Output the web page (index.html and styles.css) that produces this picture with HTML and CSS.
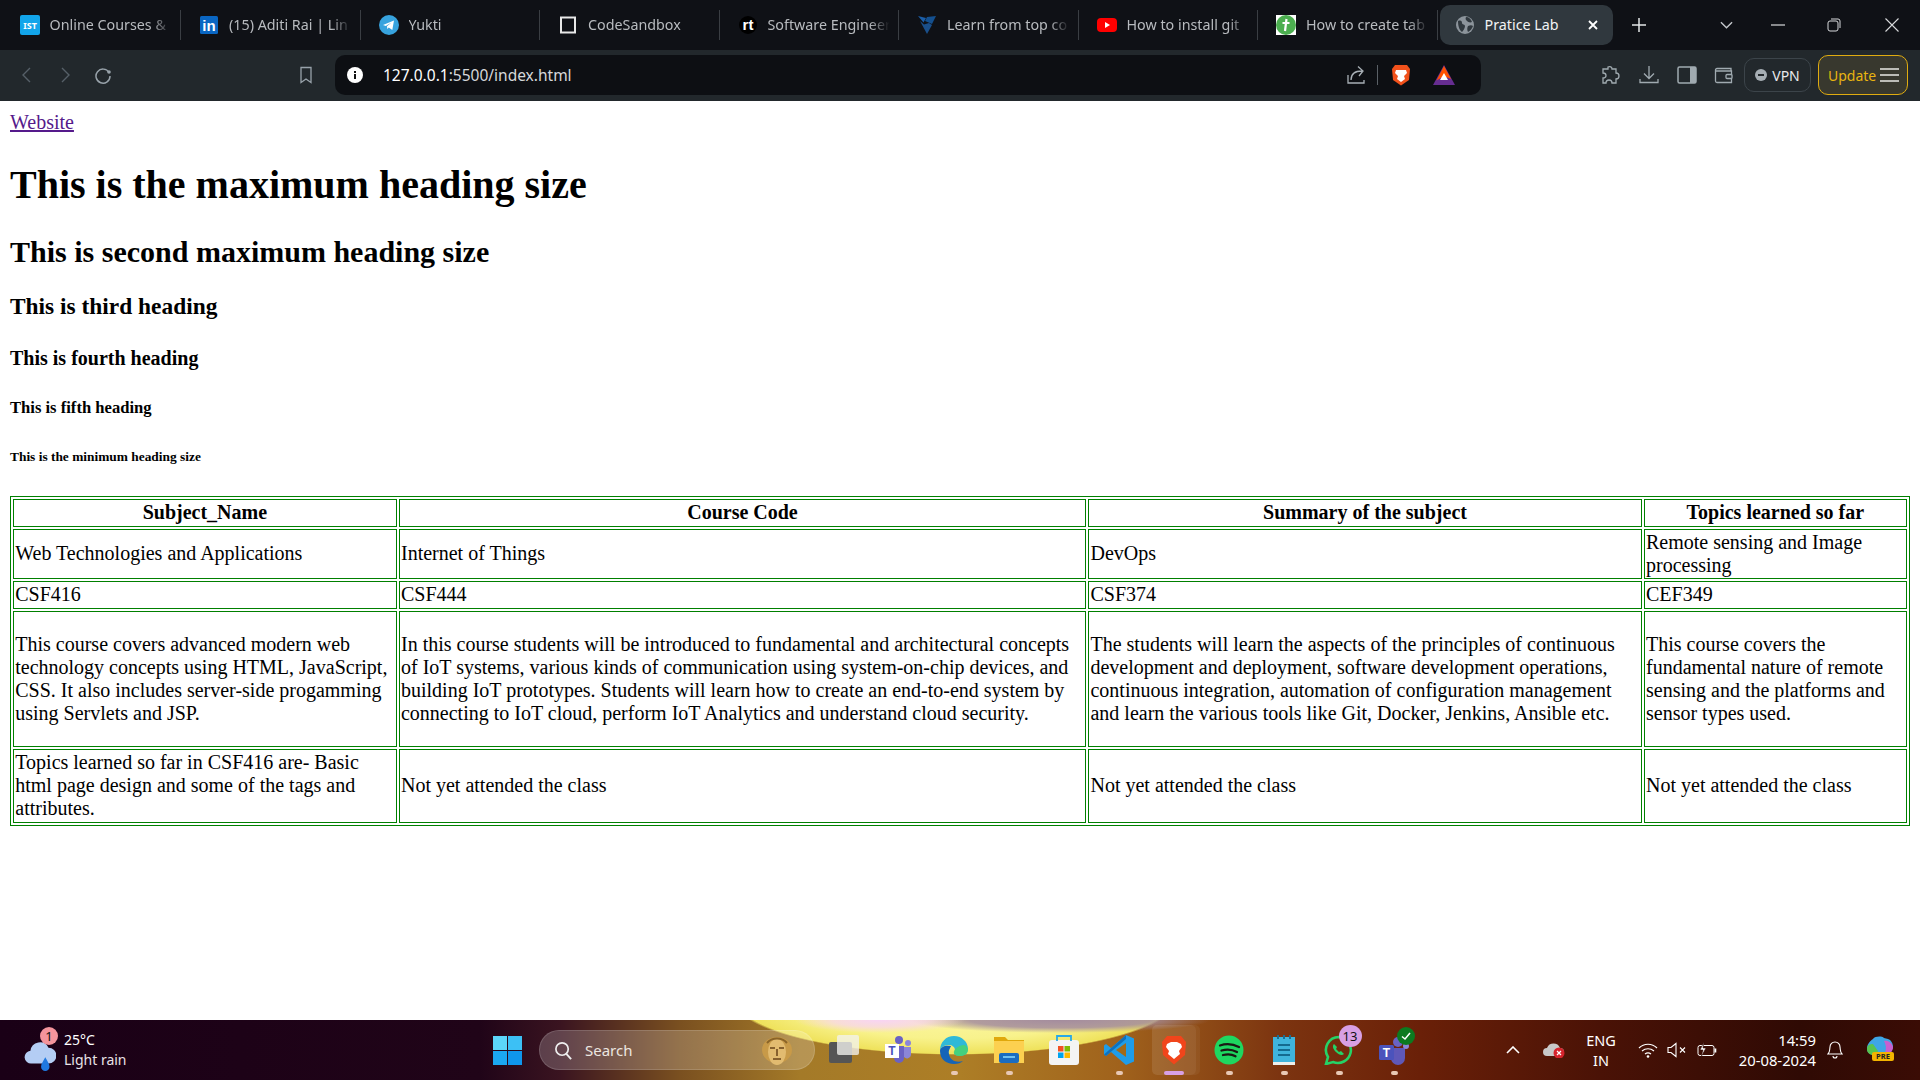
FILE: index.html
```html
<!DOCTYPE html>
<html lang="en">
<head>
<meta charset="utf-8">
<title>Pratice Lab</title>
<link rel="stylesheet" href="styles.css">
</head>
<body>
<div class="screen">
  <header class="browser">
    <div class="tabstrip">
      <div class="tab"><svg class="fav" viewBox="0 0 20 20"><rect width="20" height="20" rx="2" fill="#12a5ea"/><text x="10" y="14" class="favt">IST</text></svg><span class="tabtitle">Online Courses &amp;</span></div>
      <div class="tab"><svg class="fav" viewBox="0 0 20 20"><rect x="1" y="1" width="18" height="18" rx="1.500" fill="#0a66c2"/><text x="10" y="16" class="favin">in</text></svg><span class="tabtitle">(15) Aditi Rai | Lin</span></div>
      <div class="tab"><svg class="fav" viewBox="0 0 20 20"><circle cx="10" cy="10" r="10" fill="#37a3de"/><path d="M4 10 15 5.500 13.300 15 9.800 12.500 8.300 14 8 11.300 12.500 7.500 6.800 11z" fill="#fff"/></svg><span class="tabtitle">Yukti</span></div>
      <div class="tab"><svg class="fav" viewBox="0 0 20 20"><rect x="3" y="2.500" width="14" height="15" fill="none" stroke="#e8e8e8" stroke-width="2"/></svg><span class="tabtitle">CodeSandbox</span></div>
      <div class="tab"><svg class="fav" viewBox="0 0 20 20"><circle cx="10" cy="10" r="9" fill="#000"/><text x="10" y="15" class="favrt">rt</text></svg><span class="tabtitle">Software Engineer</span></div>
      <div class="tab"><svg class="fav" viewBox="0 0 20 20"><path d="M1 1 9 3 6.500 7.500z" fill="#1b5ea8"/><path d="M10 2 19 1 15 9 8 6z" fill="#14508f"/><path d="M3 6 7 9.500 12 8 15 10 10 19z" fill="#1a4f8a"/></svg><span class="tabtitle">Learn from top co</span></div>
      <div class="tab"><svg class="fav" viewBox="0 0 20 20"><rect y="3" width="20" height="14" rx="4" fill="#f00"/><path d="M8 7 13 10 8 13z" fill="#fff"/></svg><span class="tabtitle">How to install git</span></div>
      <div class="tab"><svg class="fav" viewBox="0 0 20 20"><rect width="20" height="20" fill="#fff"/><circle cx="10" cy="10" r="10" fill="#4caf50"/><path d="M10.500 4 9 16M6.500 8h7" stroke="#fff" stroke-width="2.200" fill="none"/></svg><span class="tabtitle">How to create tab</span></div>
      <div class="tab tab-active"><svg class="fav-globe" viewBox="0 0 18 18"><circle cx="9" cy="9" r="9" fill="#8c949b"/><path d="M2 5c3-1 4 0 4 2s3 1 3 3-2 5-3 6C3 14 2 9 2 5zM10 1c3 0 5 2 6 5-2 1-4 0-5-1s-2-2-1-4zM12 10c2-1 4-1 5 0-1 3-3 5-5 6-1-2-1-4 0-6z" fill="#30383e"/></svg><span class="active-title">Pratice Lab</span><svg class="ic-close" viewBox="0 0 12 12"><path d="M2 2 10 10M10 2 2 10" stroke="#fff" stroke-width="1.800"/></svg></div>
      <svg class="newtab" viewBox="0 0 14 14"><path d="M7 0v14M0 7h14" stroke="#e4e6e8" stroke-width="1.500"/></svg>
      <svg class="tabmenu" viewBox="0 0 14 8"><path d="M1 1 7 7 13 1" stroke="#c4c8cc" stroke-width="1.500" fill="none"/></svg>
      <svg class="winbtn win-min" viewBox="0 0 14 14"><path d="M0 7h14" stroke="#d8dadc" stroke-width="1.200"/></svg>
      <svg class="winbtn win-max" viewBox="0 0 14 14"><rect x="1" y="3" width="10" height="10" rx="2" fill="none" stroke="#d8dadc"/><path d="M4 1h7a2 2 0 0 1 2 2v7" fill="none" stroke="#d8dadc"/></svg>
      <svg class="winbtn win-close" viewBox="0 0 14 14"><path d="M.500.500 13.500 13.500M13.500.500.500 13.500" stroke="#d8dadc" stroke-width="1.100"/></svg>
    </div>
    <div class="toolbar">
      <span class="slot"><svg class="i18" viewBox="0 0 18 18"><path d="M12 2 5 9 12 16" stroke="#566068" stroke-width="1.400" fill="none"/></svg></span>
      <span class="slot"><svg class="i18" viewBox="0 0 18 18"><path d="M6 2 13 9 6 16" stroke="#566068" stroke-width="1.400" fill="none"/></svg></span>
      <span class="slot"><svg class="i18" viewBox="0 0 18 18"><path d="M15 6.500A7 7 0 1 0 16 10" stroke="#98a2aa" stroke-width="1.500" fill="none"/><circle cx="15" cy="6" r="1.800" fill="#98a2aa"/></svg></span>
      <span class="slot slot-bookmark"><svg class="i18" viewBox="0 0 18 18"><path d="M4 1.500h10V16.500L9 13 4 16.500z" stroke="#98a2aa" stroke-width="1.300" fill="none"/></svg></span>
      <div class="urlbar">
        <svg class="info" viewBox="0 0 16 16"><circle cx="8" cy="8" r="8" fill="#fff"/><rect x="7" y="7" width="2" height="5" fill="#111"/><rect x="7" y="4" width="2" height="2" fill="#111"/></svg>
        <span class="url">127.0.0.1<span class="url-dim">:5500/index.html</span></span>
        <svg class="share" viewBox="0 0 20 20"><path d="M2 10v8h16v-3" stroke="#a8b0b6" stroke-width="1.300" fill="none"/><path d="M5 15c0-6 4-9 11-9M12 1.500 17 6l-4 5" stroke="#a8b0b6" stroke-width="1.300" fill="none"/></svg>
        <span class="urlsep"></span>
        <svg class="brave" viewBox="0 0 20 22"><path d="M4 1h12l3 4-1 11-8 5.500L2 16 1 5z" fill="#f1511b"/><path d="M5 6h10l1 3-3 3 1 3-4 3-4-3 1-3-3-3z" fill="#fff"/></svg>
        <svg class="bat" viewBox="0 0 22 20"><path d="M11 0 22 20H0z" fill="#662d91"/><path d="M11 1 18 14 11 11 3.500 15.500z" fill="#ff5000"/><path d="M11 8 15 15H7z" fill="#fff"/></svg>
      </div>
      <span class="slot slot-puzzle"><svg class="i20" viewBox="0 0 20 20"><path d="M7 2c2-1 4 0 4 2h4v4c2 0 3 1.500 3 3s-1 3-3 3v4h-4c0-2-1.500-3-3-3s-3 1-3 3H2v-5c2 0 3-1 3-2.500S4 8 2 8V4h5z" stroke="#a0aab0" stroke-width="1.300" fill="none"/></svg></span>
      <span class="slot"><svg class="i20" viewBox="0 0 20 20"><path d="M10 1v12M5 8.500 10 13.500 15 8.500M1 14v3.500h18V14" stroke="#a0aab0" stroke-width="1.300" fill="none"/></svg></span>
      <span class="slot slot-narrow"><svg class="i20" viewBox="0 0 20 20"><rect x="1" y="2" width="18" height="16" rx="1.500" fill="none" stroke="#a0aab0" stroke-width="1.500"/><rect x="13" y="2" width="6" height="16" fill="#a0aab0"/></svg></span>
      <span class="slot slot-narrow"><svg class="i20" viewBox="0 0 20 20"><path d="M17 6V3.500H3a1.500 1.500 0 0 0-1.500 1.500v11A1.500 1.500 0 0 0 3 17.500h14.500V6H2" stroke="#a0aab0" stroke-width="1.300" fill="none"/><rect x="12" y="9.500" width="6" height="4" rx="1" stroke="#a0aab0" stroke-width="1.300" fill="#22282c"/></svg></span>
      <div class="vpn"><svg class="vpn-dot" viewBox="0 0 12 12"><circle cx="6" cy="6" r="6" fill="#a6aeb4"/><rect x="3" y="5" width="6" height="2" fill="#22282c"/></svg><span>VPN</span></div>
      <div class="update"><span>Update</span><svg class="burger" viewBox="0 0 19 14"><path d="M0 1h19M0 7h19M0 13h19" stroke="#e8e8e4" stroke-width="1.300"/></svg></div>
    </div>
  </header>

  <main class="page">
    <a class="site-link" href="#">Website</a>
    <h1>This is the maximum heading size</h1>
    <h2>This is second maximum heading size</h2>
    <h3>This is third heading</h3>
    <h4>This is fourth heading</h4>
    <h5>This is fifth heading</h5>
    <h6>This is the minimum heading size</h6>
    <table class="subjects">
      <tr><th>Subject_Name</th><th>Course Code</th><th>Summary of the subject</th><th>Topics learned so far</th></tr>
      <tr><td>Web Technologies and Applications</td><td>Internet of Things</td><td>DevOps</td><td>Remote sensing and Image processing</td></tr>
      <tr><td>CSF416</td><td>CSF444</td><td>CSF374</td><td>CEF349</td></tr>
      <tr>
        <td><p>This course covers advanced modern web technology concepts using HTML, JavaScript, CSS. It also includes server-side progamming using Servlets and JSP.</p></td>
        <td><p>In this course students will be introduced to fundamental and architectural concepts of IoT systems, various kinds of communication using system-on-chip devices, and building IoT prototypes. Students will learn how to create an end-to-end system by connecting to IoT cloud, perform IoT Analytics and understand cloud security.</p></td>
        <td><p>The students will learn the aspects of the principles of continuous development and deployment, software development operations, continuous integration, automation of configuration management and learn the various tools like Git, Docker, Jenkins, Ansible etc.</p></td>
        <td><p>This course covers the fundamental nature of remote sensing and the platforms and sensor types used.</p></td>
      </tr>
      <tr><td>Topics learned so far in CSF416 are- Basic html page design and some of the tags and attributes.</td><td>Not yet attended the class</td><td>Not yet attended the class</td><td>Not yet attended the class</td></tr>
    </table>
  </main>

  <footer class="taskbar">
    <div class="weather">
      <span class="weather-icon">
        <svg class="cloud" viewBox="0 0 30 34"><path d="M7 26a6 6 0 0 1-1-12 9 9 0 0 1 17-3 7.500 7.500 0 0 1 0 15z" fill="#b4cdf4"/><path d="M20 20c2 4 4 6 4 9a4 4 0 0 1-8 0c0-3 2-5 4-9z" fill="#1f78e0"/></svg>
        <span class="notif">1</span>
      </span>
      <div class="weather-text"><span class="temp">25°C</span><span class="cond">Light rain</span></div>
    </div>
    <svg class="winlogo" viewBox="0 0 29 29"><rect width="14" height="14" fill="#5cd6f9"/><rect x="15" width="14" height="14" fill="#3cc0f5"/><rect y="15" width="14" height="14" fill="#1ba8f2"/><rect x="15" y="15" width="14" height="14" fill="#0f96ec"/></svg>
    <div class="search">
      <svg class="search-ic" viewBox="0 0 20 20"><circle cx="8.500" cy="8.500" r="6.500" fill="none" stroke="#eee" stroke-width="1.800"/><path d="M13 13.500 18 19" stroke="#eee" stroke-width="2"/></svg>
      <span class="search-label">Search</span>
      <svg class="mummy" viewBox="0 0 30 32"><ellipse cx="15" cy="16" rx="15" ry="13" fill="#c89a48"/><ellipse cx="15" cy="18" rx="9" ry="13" fill="#e2bb70"/><path d="M8 14h5M17 14h5M15 15v7M11 25h8" stroke="#6a4418" stroke-width="1.500"/><path d="M5 9c5-6 15-6 20 0" stroke="#8a6428" stroke-width="2" fill="none"/></svg>
    </div>
    <div class="apps">
      <span class="app"><svg class="i30" viewBox="0 0 30 30"><rect x="0" y="7" width="23" height="21" rx="2" fill="#555"/><rect x="8" y="0" width="22" height="20" rx="2" fill="#f2f2ee" opacity=".78"/></svg></span>
      <span class="app"><svg class="i30" viewBox="0 0 30 30"><circle cx="15" cy="5" r="4" fill="#6a62c4"/><circle cx="24" cy="8" r="3" fill="#8b86d8"/><path d="M10 11h10v12a5 5 0 0 1-10 0z" fill="#6a62c4"/><path d="M20 12h7v8a4 4 0 0 1-7 2z" fill="#8b86d8"/><rect x="1" y="9" width="14" height="14" fill="#fff"/><text x="8" y="20" class="teams-t dark">T</text></svg></span>
      <span class="app"><svg class="i30" viewBox="0 0 30 30"><path d="M1 16C1 7 7 1 15 1s14 6 14 13c0 5-4 7-8 7-3 0-6-1-6-3 0-1 1-1 1-3 0-3-3-5-6-5-5 0-9 3-9 6z" fill="#2fb9d8"/><path d="M29 14c0 5-4 7-8 7-4 0-7-2-6-5 1-3 6-6 10-6 2 0 3 2 4 4z" fill="#49d36e" opacity=".85"/><path d="M1 16c0 8 6 13 14 13 4 0 7-1 9-3-6 2-13 0-14-7-1-4 2-7 2-8-6-1-11 1-11 5z" fill="#1464b8"/></svg><i class="dot"></i></span>
      <span class="app"><svg class="i30" viewBox="0 0 30 30"><path d="M0 2h11l3 3h16v23H0z" fill="#e0a80c"/><rect y="6" width="30" height="22" fill="#fcd050"/><rect x="5" y="18" width="20" height="10" rx="2" fill="#1a6cc0"/><rect x="9" y="21" width="12" height="2" fill="#6ec0f0"/></svg><i class="dot"></i></span>
      <span class="app"><svg class="i30" viewBox="0 0 30 30"><rect y="5" width="30" height="25" rx="3" fill="#f4f4f4"/><path d="M8 6V1h14v5" fill="none" stroke="#28a8e8" stroke-width="1.800"/><rect x="9" y="11" width="5.500" height="5.500" fill="#f25022"/><rect x="15.500" y="11" width="5.500" height="5.500" fill="#7fba00"/><rect x="9" y="17.500" width="5.500" height="5.500" fill="#00a4ef"/><rect x="15.500" y="17.500" width="5.500" height="5.500" fill="#ffb900"/></svg></span>
      <span class="app"><svg class="i30" viewBox="0 0 30 30"><path d="M22 0 30 3.500V26.500L22 30 7 17 2 21 0 19.500V10.500L2 9 7 13z" fill="#1f9ce8"/><path d="M22 8 12 15 22 22z" fill="#a1691a"/><path d="M0 19.500 2 21 22 4V0z" fill="#0c6cb8" opacity=".9"/></svg><i class="dot"></i></span>
      <span class="app app-active"><svg class="brave-big" viewBox="0 0 26 30"><path d="M6 1h14l5 6-1 13-11 9.500L2 20 1 7z" fill="#f1451b"/><path d="M6 9l4-2h6l4 2 1 3-3 4 1 3-6 5-6-5 1-3-3-4z" fill="#fff"/></svg><i class="dot dot-active"></i></span>
      <span class="app"><svg class="i30" viewBox="0 0 30 30"><circle cx="15" cy="15" r="14.500" fill="#1ed760"/><path d="M6 10.500c6-2 13-1.500 19 1.500M7.500 15.500c5-1.500 11-1 15.500 1.500M9 20c4-1 9-.8 12.500 1.200" stroke="#1a1a14" stroke-width="2.300" fill="none" stroke-linecap="round"/></svg><i class="dot"></i></span>
      <span class="app"><svg class="note" viewBox="0 0 22 30"><rect y="2" width="22" height="27" fill="#3fb4dc"/><rect y="27" width="22" height="3" fill="#eeeeea"/><path d="M5 0v4M11 0v4M17 0v4" stroke="#1a6e92" stroke-width="2"/><path d="M5 10h12M5 15h12M5 20h12" stroke="#146a90" stroke-width="2"/></svg><i class="dot"></i></span>
      <span class="app"><svg class="i30" viewBox="0 0 30 30"><path d="M15 2a13 13 0 0 0-11 20L2 29l7-2A13 13 0 1 0 15 2z" fill="none" stroke="#25d366" stroke-width="2.600"/><path d="M10 9c-2 2-1 5 2 8s6 4 8 2l-3-3-2 1-3-3 1-2z" fill="#25d366"/></svg><i class="dot"></i><span class="badge-13">13</span></span>
      <span class="app"><svg class="i30" viewBox="0 0 30 30"><circle cx="19" cy="7" r="5" fill="#6a62c4"/><path d="M12 13h14v10a7 7 0 0 1-14 0z" fill="#5f58b8"/><circle cx="27" cy="11" r="3" fill="#8b86d8"/><rect x="0" y="10" width="15" height="15" rx="1.500" fill="#4b53bc"/><text x="7.500" y="22" class="teams-t">T</text></svg><i class="dot"></i><svg class="check" viewBox="0 0 18 18"><circle cx="9" cy="9" r="9" fill="#0c7a20"/><path d="M5 9.500 8 12l5-6" stroke="#fff" stroke-width="1.500" fill="none"/></svg></span>
    </div>
    <div class="tray">
      <svg class="chev" viewBox="0 0 14 8"><path d="M1 7 7 1 13 7" stroke="#fff" stroke-width="1.600" fill="none"/></svg>
      <span class="od"><svg class="od-ic" viewBox="0 0 22 16"><path d="M4 14a4 4 0 0 1 0-8 7 7 0 0 1 13 0 4 4 0 0 1 0 8z" fill="#c8c8c8"/><circle cx="16" cy="11" r="5.500" fill="#d6232c"/><path d="M14 9 18 13M18 9 14 13" stroke="#fff" stroke-width="1.200"/></svg></span>
      <div class="lang"><span>ENG</span><span>IN</span></div>
      <svg class="wifi" viewBox="0 0 20 16"><path d="M1 6c5-5 13-5 18 0M4 9c3.500-3 8.500-3 12 0M7 12c2-1.500 4-1.500 6 0" stroke="#fff" stroke-width="1.200" fill="none"/><circle cx="10" cy="14.500" r="1.300" fill="#fff"/></svg>
      <svg class="vol" viewBox="0 0 20 16"><path d="M1 5.500h3L9 1.500v13L4 10.500H1z" stroke="#fff" stroke-width="1.100" fill="none"/><path d="M13 5.500 18 10.500M18 5.500 13 10.500" stroke="#fff" stroke-width="1.100"/></svg>
      <svg class="batt" viewBox="0 0 20 16"><rect x="1" y="3.500" width="16" height="10" rx="2" stroke="#fff" fill="none"/><rect x="17.500" y="6.500" width="1.800" height="4" fill="#fff"/><path d="M7 0 3 8h3l-2 7 5-9H6z" fill="#fff" stroke="#300a04" stroke-width=".6"/></svg>
      <div class="clock"><span>14:59</span><span>20-08-2024</span></div>
      <svg class="bell" viewBox="0 0 16 18"><path d="M1 13c2-2 1.500-4 2-7a5 5 0 0 1 10 0c.5 3 0 5 2 7z" stroke="#fff" stroke-width="1.100" fill="none"/><path d="M6 15a2 2 0 0 0 4 0" stroke="#fff" stroke-width="1.100" fill="none"/></svg>
      <span class="copilot"><svg class="cp-ic" viewBox="0 0 28 22"><path d="M7 3c2-3 9-3 11-1l4 1c3 1 5 4 5 8-1 5-4 8-9 8H9c-5 0-8-3-8-6 0-5 3-8 6-10z" fill="#3ea6e6"/><path d="M1 13c0-4 3-5 6-5l5 7c-1 3-2 4-4 4-4 0-7-2-7-6z" fill="#58c450"/><path d="M18 5c4-1 8 2 9 6 0 5-4 8-9 8 2-3 3-9 0-14z" fill="#c860d0"/></svg><span class="pre">PRE</span></span>
    </div>
  </footer>
</div>
</body>
</html>
```
FILE: styles.css
```css
* { box-sizing: border-box; }
html, body { margin: 0; height: 100%; }
body { font-family: "Liberation Serif", "Times New Roman", serif; font-size: 20px; color: #000; background: #fff; }
.screen { width: 1920px; height: 1080px; display: flex; flex-direction: column; overflow: hidden; }

/* browser chrome */
.browser { flex: none; height: 101px; font-family: "Noto Sans", "Open Sans", sans-serif; }
.tabstrip { height: 50px; background: #0f1116; display: flex; align-items: center; padding-left: 1.500px; }
.tab { width: 179.500px; height: 30px; display: flex; align-items: center; gap: 10px; padding-left: 18px; padding-right: 6px; border-right: 1px solid #3a3e43; }
.fav { width: 20px; height: 20px; flex: none; }
.favt { font: 700 9px "Noto Sans", sans-serif; fill: #fff; text-anchor: middle; }
.favin { font: 700 15px "Liberation Sans", sans-serif; fill: #fff; text-anchor: middle; }
.favrt { font: 700 15px "Liberation Sans", sans-serif; fill: #fff; text-anchor: middle; }
.tabtitle { flex: 1; min-width: 0; overflow: hidden; white-space: nowrap; font-size: 14.300px; line-height: 18px; padding-bottom: 1px; color: #b8bbbf; -webkit-mask-image: linear-gradient(to right, #000 82%, transparent 98%); mask-image: linear-gradient(to right, #000 82%, transparent 98%); }
.tab-active { width: 173px; height: 40px; margin-left: 2px; padding-left: 16px; padding-right: 14px; border: 0; border-radius: 10px; background: #30383e; }
.fav-globe { width: 18px; height: 18px; flex: none; }
.active-title { font-size: 14.300px; line-height: 18px; padding-bottom: 1px; color: #f2f3f4; flex: 1; margin-left: 1px; }
.ic-close { width: 12px; height: 12px; flex: none; }
.newtab { width: 14px; height: 14px; margin-left: 19px; }
.tabmenu { width: 13px; height: 8px; margin-left: 74px; }
.winbtn { width: 14px; height: 14px; }
.win-min { margin-left: 38px; }
.win-max { margin-left: 42px; }
.win-close { margin-left: 44px; }

.toolbar { height: 51px; background: #22282c; display: flex; align-items: flex-start; padding: 5px 0 0 8px; }
.slot { width: 38px; height: 40px; display: flex; align-items: center; justify-content: center; flex: none; }
.slot-bookmark { margin-left: 165px; }
.slot-puzzle { margin-left: 111px; }
.slot-narrow { width: 37px; }
.i18 { width: 18px; height: 18px; }
.i20 { width: 20px; height: 20px; }
.urlbar { width: 1146px; height: 40px; margin-left: 10px; background: #0d0f13; border-radius: 10px; display: flex; align-items: center; padding-left: 12px; }
.info { width: 16px; height: 16px; flex: none; }
.url { margin-left: 20px; font-size: 15.500px; line-height: 20px; padding-bottom: 1px; color: #fff; }
.url-dim { color: #d6d8da; }
.share { width: 20px; height: 20px; margin-left: auto; }
.urlsep { width: 1px; height: 20px; background: #5a6066; margin-left: 11px; }
.brave { width: 20px; height: 22px; margin-left: 13px; }
.bat { width: 22px; height: 20px; margin-left: 22px; margin-right: 26px; }
.vpn { width: 67px; height: 34px; margin: 3px 0 0 2px; border: 1px solid #3c444a; border-radius: 10px; display: flex; align-items: center; justify-content: center; gap: 5px; color: #e8eaec; font-size: 14px; }
.vpn-dot { width: 12px; height: 12px; }
.update { width: 90px; height: 40px; margin-left: 7px; border: 1px solid #e0ac10; border-radius: 10px; background: #38382e; color: #e8b410; font-size: 14px; display: flex; align-items: center; padding-left: 9px; gap: 4px; }
.burger { width: 19px; height: 14px; }

/* page */
.page { flex: 1; min-height: 0; padding: 10px; }
.site-link { color: #551a8b; }
.subjects { width: 100%; border: 1px solid #008000; border-spacing: 2.500px; }
.subjects th, .subjects td { border: 1px solid #008000; padding: 1.250px; }

/* taskbar */
.taskbar {
  flex: none; height: 60px; display: flex; align-items: center; position: relative;
  font-family: "Noto Sans", "Open Sans", sans-serif; color: #fff;
  background:
    radial-gradient(ellipse 85px 13px at 880px 0, #f8d4f4 0%, rgba(248,212,244,.7) 55%, transparent 100%),
    radial-gradient(ellipse 150px 13px at 1060px 0, #a48c9e 0%, rgba(164,140,158,.85) 60%, transparent 100%),
    radial-gradient(ellipse 228px 58px at 955px -22px, #fdf8b0 0%, #f8f28c 70%, #efe25c 96%, rgba(239,226,92,0) 98%),
    linear-gradient(to right, #1a0016 0, #200418 480px, #3a1420 560px, #7a5020 680px, #a47a28 800px, #ad7e26 960px, #a0621c 1120px, #7c3410 1280px, #6a2008 1420px, #4a1206 1600px, #2f0a04 1800px, #3a0c05 1920px);
}
.weather { width: 493px; flex: none; display: flex; align-items: center; padding-left: 24px; gap: 8px; }
.weather-icon { position: relative; width: 32px; height: 36px; display: block; flex: none; }
.cloud { width: 32px; height: 36px; margin-top: 4px; display: block; }
.notif { position: absolute; left: 16px; top: -5px; width: 18px; height: 18px; border-radius: 50%; background: #f4949c; color: #111; font-size: 13px; line-height: 18px; text-align: center; }
.weather-text { display: flex; flex-direction: column; line-height: 20px; }
.temp { font-size: 14px; }
.cond { font-size: 14px; color: #e8e2e6; }
.winlogo { width: 29px; height: 29px; flex: none; }
.search { width: 276px; height: 40px; flex: none; margin-left: 17px; border-radius: 20px; background: rgba(255,255,255,.2); border: 1px solid rgba(255,255,255,.14); display: flex; align-items: center; padding-left: 14px; }
.search-ic { width: 19px; height: 19px; flex: none; }
.search-label { font-size: 15px; margin-left: 12px; color: #ece6e0; flex: 1; }
.mummy { width: 30px; height: 32px; margin-right: 22px; }
.apps { display: flex; margin-left: 1.500px; flex: none; }
.app { position: relative; width: 55px; height: 50px; display: flex; align-items: center; justify-content: center; flex: none; }
.i30 { width: 30px; height: 30px; }
.note { width: 22px; height: 30px; }
.brave-big { width: 26px; height: 30px; }
.app-active { background: rgba(255,255,255,.1); border-radius: 5px; width: 44px; margin: 0 5.500px; box-shadow: 4px 0 0 rgba(255,255,255,.05); }
.dot { position: absolute; left: 24px; bottom: 0; width: 7px; height: 4px; border-radius: 2px; background: #e8c8b4; }
.dot-active { left: 12px; width: 20px; background: #d8a0e4; }
.badge-13 { position: absolute; left: 27px; top: 0; width: 23px; height: 22px; border-radius: 50%; background: #d8a0e4; color: #111; font-size: 13px; line-height: 22px; text-align: center; }
.check { position: absolute; left: 30px; top: 2px; width: 18px; height: 18px; }
.teams-t { font: 700 12px "Liberation Sans", sans-serif; fill: #fff; text-anchor: middle; }
.teams-t.dark { fill: #4b53bc; }
.tray { flex: 1; display: flex; align-items: center; }
.chev { width: 14px; height: 8px; margin-left: 84.500px; }
.od { margin-left: 23px; display: flex; }
.od-ic { width: 22px; height: 16px; }
.lang { width: 36px; margin-left: 18px; display: flex; flex-direction: column; align-items: center; font-size: 14.500px; line-height: 20px; }
.wifi { width: 20px; height: 16px; margin-left: 19px; }
.vol { width: 20px; height: 16px; margin-left: 9px; }
.batt { width: 20px; height: 16px; margin-left: 10px; }
.clock { width: 99px; display: flex; flex-direction: column; align-items: flex-end; font-size: 14.800px; line-height: 20px; }
.bell { width: 16px; height: 18px; margin-left: 11px; }
.copilot { position: relative; margin-left: 23px; display: flex; width: 28px; height: 28px; }
.cp-ic { width: 28px; height: 22px; }
.pre { position: absolute; left: 6px; top: 16px; width: 22px; height: 9px; border-radius: 2px; background: #f4b400; color: #222; font-size: 7.500px; font-weight: 700; line-height: 9px; text-align: center; }
```
